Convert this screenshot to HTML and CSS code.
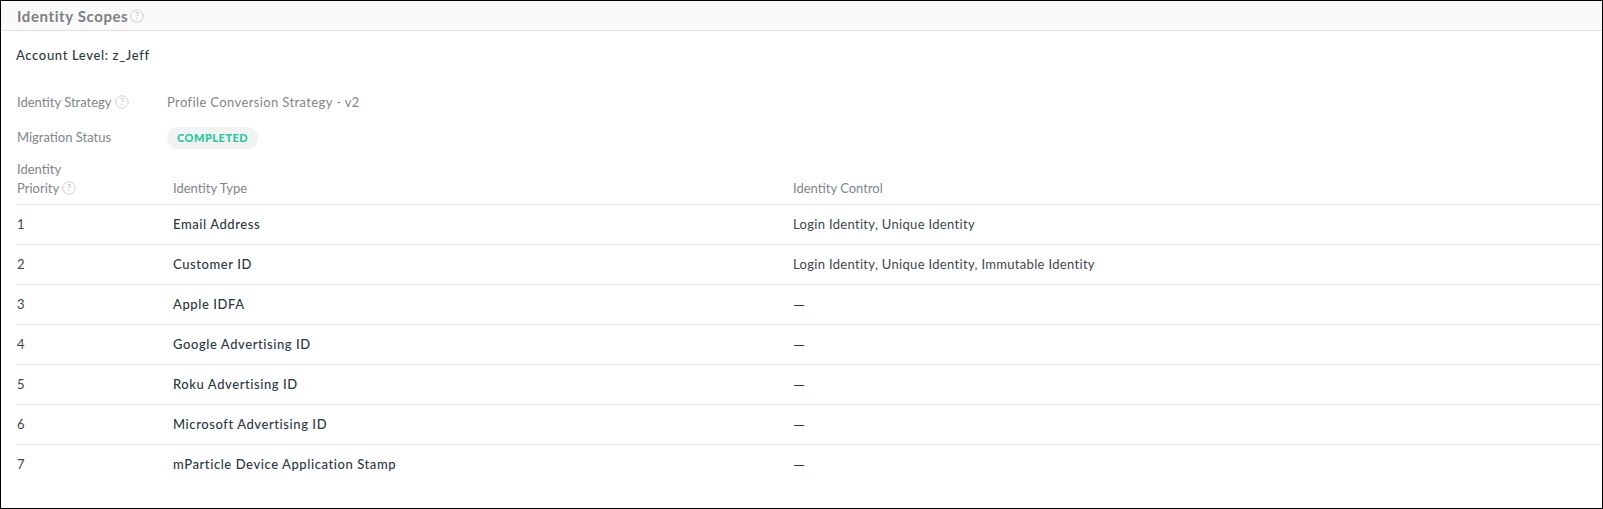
FILE: index.html
```html
<!DOCTYPE html>
<html lang="en">
<head>
<meta charset="utf-8">
<title>Identity Scopes</title>
<link rel="stylesheet" href="styles.css">
</head>
<body>
<main class="panel">
  <header class="panel-head">
    <h1 class="panel-title">Identity Scopes</h1>
    <svg class="help help-title" viewBox="0 0 14 14"><circle cx="7" cy="7" r="6.2"/><text x="7" y="10.2">?</text></svg>
  </header>
  <div class="panel-body">
    <p class="account">Account Level: z_Jeff</p>
    <div class="meta">
      <div class="meta-row">
        <div class="meta-label">Identity Strategy <svg class="help" viewBox="0 0 14 14"><circle cx="7" cy="7" r="6.2"/><text x="7" y="10.2">?</text></svg></div>
        <div class="meta-value">Profile Conversion Strategy - v2</div>
      </div>
      <div class="meta-row">
        <div class="meta-label">Migration Status</div>
        <div class="meta-value"><span class="badge">COMPLETED</span></div>
      </div>
    </div>
    <table class="scopes">
      <colgroup><col class="c1"><col class="c2"><col></colgroup>
      <thead>
        <tr>
          <th class="first"><span class="th-wrap">Identity Priority <svg class="help" viewBox="0 0 14 14"><circle cx="7" cy="7" r="6.2"/><text x="7" y="10.2">?</text></svg></span></th>
          <th>Identity Type</th>
          <th>Identity Control</th>
        </tr>
      </thead>
      <tbody>
        <tr><td class="first">1</td><td class="name">Email Address</td><td>Login Identity, Unique Identity</td></tr>
        <tr><td class="first">2</td><td class="name">Customer ID</td><td>Login Identity, Unique Identity, Immutable Identity</td></tr>
        <tr><td class="first">3</td><td class="name">Apple IDFA</td><td class="dash">—</td></tr>
        <tr><td class="first">4</td><td class="name">Google Advertising ID</td><td class="dash">—</td></tr>
        <tr><td class="first">5</td><td class="name">Roku Advertising ID</td><td class="dash">—</td></tr>
        <tr><td class="first">6</td><td class="name">Microsoft Advertising ID</td><td class="dash">—</td></tr>
        <tr><td class="first">7</td><td class="name">mParticle Device Application Stamp</td><td class="dash">—</td></tr>
      </tbody>
    </table>
  </div>
</main>
</body>
</html>
```

FILE: styles.css
```css
* { box-sizing: border-box; }
html, body { margin: 0; padding: 0; background: #fff; }
body {
  font-family: "Lato", "Open Sans", sans-serif;
  font-size: 13px;
  letter-spacing: 0.32px;
  color: #2f3d47;
}
.panel {
  width: 1603px;
  height: 509px;
  border: 1px solid #000;
  background: #fff;
}
.panel-head {
  display: flex;
  align-items: center;
  height: 30px;
  padding-left: 16px;
  background: #fafafa;
  border-bottom: 1px solid #e2e2e2;
}
.panel-title {
  margin: 0;
  font-size: 15px;
  font-weight: 700;
  letter-spacing: 0.6px;
  color: #7b8085;
}
.help { width: 14px; height: 14px; flex: none; vertical-align: -2px; }
.help circle { fill: none; stroke: #cfcfcf; stroke-width: 1; }
.help text {
  font-family: "Lato", sans-serif;
  font-size: 9px;
  fill: #bcbcbc;
  text-anchor: middle;
  letter-spacing: 0;
}
.help-title { margin-left: 2px; }
.panel-body { padding: 16px 0 0 15px; }
.account {
  margin: 0;
  line-height: 16px;
  font-size: 13px;
  font-weight: 500;
  color: #2a3a45;
  letter-spacing: 0.65px;
}
.meta { margin-top: 21px; }
.meta-row {
  display: flex;
  align-items: center;
  height: 35px;
  color: #80868b;
}
.meta-label { width: 151px; padding-left: 1px; letter-spacing: 0; }
.meta-value { letter-spacing: 0.38px; }
.badge {
  display: block;
  height: 22px;
  margin-top: 3px;
  line-height: 22px;
  padding: 0 10px;
  border-radius: 11px;
  background: #f1f3f3;
  color: #1fc99b;
  font-size: 11px;
  font-weight: 900;
  letter-spacing: 0.5px;
}
.scopes {
  width: 1586px;
  border-collapse: collapse;
  table-layout: fixed;
}
.c1 { width: 157px; }
.c2 { width: 620px; }
.scopes th {
  padding: 6px 0;
  font-weight: 400;
  text-align: left;
  vertical-align: bottom;
  line-height: 19px;
  letter-spacing: 0;
  color: #80868b;
  border-bottom: 1px solid #e6e6e6;
}
.th-wrap { display: block; width: 80px; }
.scopes td {
  height: 40px;
  padding: 0 0 2px;
  border-bottom: 1px solid #e6e6e6;
  color: #3b4850;
}
.scopes .first { padding-left: 1px; }
.scopes tbody tr:last-child td { border-bottom: 0; }
.scopes td.name { font-weight: 500; letter-spacing: 0.58px; color: #2a3a45; }
.scopes td.dash { padding-bottom: 1px; font-size: 15px; letter-spacing: 0; color: #2a3a45; }
```
